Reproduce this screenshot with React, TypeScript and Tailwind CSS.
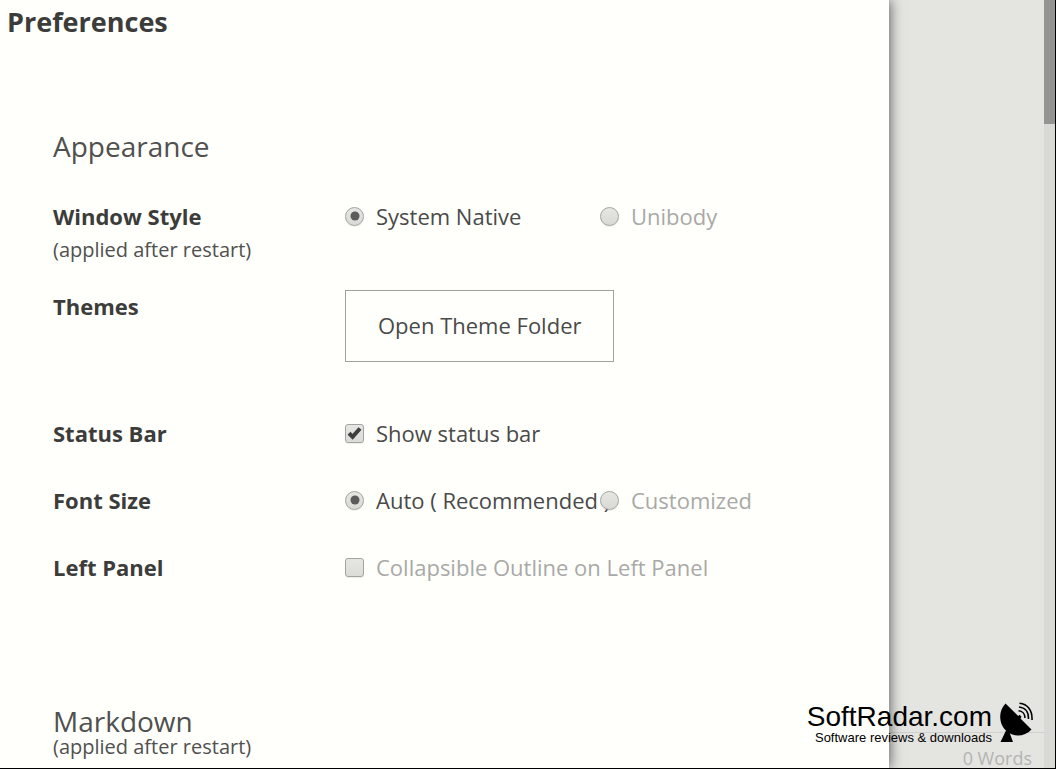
import type { ReactNode } from "react";

const radioClass =
  "peer relative z-10 size-[19px] shrink-0 appearance-none rounded-full border border-[#a3a3a0] bg-linear-to-b from-[#e6e6e3] to-[#d9d9d6] shadow-[0_1px_1px_rgba(0,0,0,0.08)] before:absolute before:top-1/2 before:left-1/2 before:size-[9px] before:-translate-1/2 before:rounded-full before:bg-[#5c5c5b] before:opacity-0 checked:before:opacity-100";

const optionTextClass =
  "whitespace-nowrap text-[#a9a9a7] peer-checked:text-[#4a4a49]";

function Radio({
  name,
  label,
  checked = false,
}: {
  name: string;
  label: string;
  checked?: boolean;
}) {
  return (
    <label className="flex items-center gap-3">
      <input type="radio" name={name} defaultChecked={checked} className={radioClass} />
      <span className={optionTextClass}>{label}</span>
    </label>
  );
}

function Checkbox({ label, checked = false }: { label: string; checked?: boolean }) {
  return (
    <label className="flex items-center gap-3">
      <span className="group grid size-[19px] shrink-0 place-items-center *:col-start-1 *:row-start-1">
        <input
          type="checkbox"
          aria-label={label}
          defaultChecked={checked}
          className="size-[19px] appearance-none rounded-[3px] border border-[#a3a3a0] bg-linear-to-b from-[#e6e6e3] to-[#dbdbd8] shadow-[0_1px_1px_rgba(0,0,0,0.08)]"
        />
        <svg
          viewBox="0 0 19 19"
          className="pointer-events-none z-10 hidden size-[19px] group-has-checked:block"
          fill="none"
        >
          <path d="M4 9.300 7.600 12.800 15 4.500" stroke="#3f3f3e" strokeWidth="4" />
        </svg>
      </span>
      <span className={checked ? "text-[#4a4a49]" : "text-[#a9a9a7]"}>{label}</span>
    </label>
  );
}

function Row({
  title,
  note,
  children,
}: {
  title: string;
  note?: string;
  children: ReactNode;
}) {
  return (
    <div className="grid grid-cols-[292px_1fr] leading-[34px]">
      <div>
        <h3 className="font-bold text-[#3c3c3b]">{title}</h3>
        {note && <p className="text-[20px] text-[#50504f]">{note}</p>}
      </div>
      <div>{children}</div>
    </div>
  );
}

function RadarLogo() {
  return (
    <div className="absolute right-[22px] bottom-[24px] flex gap-[7px] text-black">
      <div className="text-right font-['Liberation_Sans',sans-serif] whitespace-nowrap">
        <p className="text-[28px] leading-[30px]">SoftRadar.com</p>
        <p className="text-[13px] leading-[12px]">Software reviews &amp; downloads</p>
      </div>
      <svg viewBox="0 0 34 42" className="h-[42px] w-[34px]" aria-hidden="true">
        <path
          d="M6.500 1.500 19.200 14 20.500 12.800 22.500 14.800 21.500 16.500 32.500 27.500C25.500 35 15 35.500 8 29.500 0 23-1.500 10 6.500 1.500Z"
          fill="currentColor"
        />
        <path d="M7 28.500 10.500 30.500 14 40H1.500Z" fill="currentColor" />
        <g fill="none" stroke="currentColor" strokeWidth="1.600">
          <path d="M19.500 8.700C23.500 9 26 12 26 16" />
          <path d="M20 5C26 5.500 29.800 10 29.500 17" />
          <path d="M20.500 1.300C28.500 2 33.500 8.500 33 18" />
        </g>
      </svg>
    </div>
  );
}

export default function App() {
  return (
    <div className="relative flex h-screen overflow-hidden border-r border-b border-black bg-[#e4e4e1] font-['Open_Sans','Noto_Sans',sans-serif] text-[22px]">
      <main className="z-10 min-w-0 flex-1 bg-[#fffffc] shadow-[1px_0_12px_rgba(0,0,0,0.6)]">
        <h1 className="px-[7px] pt-[5px] text-[27px] leading-[34px] font-bold text-[#3c3c3b]">
          Preferences
        </h1>

        <div className="px-[53px] pt-[87px]">
          <section>
            <h2 className="text-[28px] leading-[40px] text-[#50504f]">Appearance</h2>
            <div className="pt-[33px]">
              <Row title="Window Style" note="(applied after restart)">
                <div className="grid grid-cols-[255px_1fr]">
                  <Radio name="window-style" label="System Native" checked />
                  <Radio name="window-style" label="Unibody" />
                </div>
              </Row>
              <div className="pt-[22px] pb-[54px]">
                <Row title="Themes">
                  <button
                    type="button"
                    className="mt-px block h-[72px] border border-[#a0a09e] px-8 pb-0.5 text-[#4a4a49]"
                  >
                    Open Theme Folder
                  </button>
                </Row>
              </div>
              <div className="flex flex-col gap-[33px]">
                <Row title="Status Bar">
                  <Checkbox label="Show status bar" checked />
                </Row>
                <Row title="Font Size">
                  <div className="grid grid-cols-[255px_1fr]">
                    <Radio name="font-size" label="Auto ( Recommended )" checked />
                    <Radio name="font-size" label="Customized" />
                  </div>
                </Row>
                <Row title="Left Panel">
                  <Checkbox label="Collapsible Outline on Left Panel" />
                </Row>
              </div>
            </div>
          </section>

          <section className="pt-[121px] text-[#50504f]">
            <h2 className="text-[28px] leading-[32px]">Markdown</h2>
            <p className="text-[20px] leading-[20px]">(applied after restart)</p>
          </section>
        </div>
      </main>

      <aside className="flex w-[155px] flex-col justify-end">
        <footer className="h-[36px] border-t border-[#d0d0ce] pt-3 pr-3 text-right text-[18px] leading-[26px] text-[#b4b4b2]">
          0 Words
        </footer>
      </aside>
      <div className="w-[11px] bg-[#d9d9d6]">
        <div className="h-[124px] bg-[#949492]" />
      </div>

      <div className="pointer-events-none absolute inset-0 z-20">
        <RadarLogo />
      </div>
    </div>
  );
}
